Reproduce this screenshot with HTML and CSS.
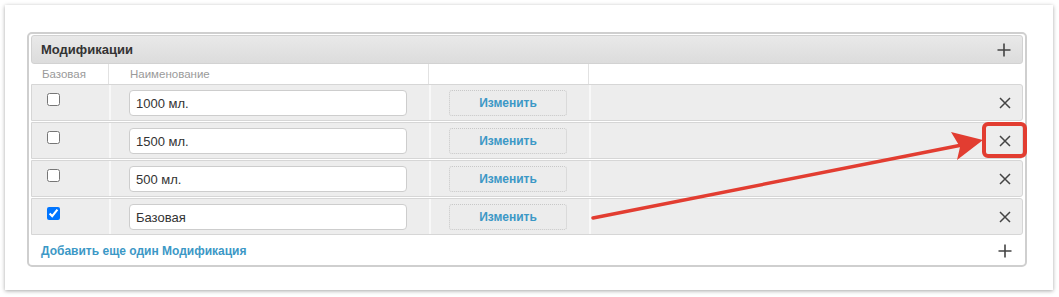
FILE: index.html
```html
<!DOCTYPE html>
<html lang="ru">
<head>
<meta charset="utf-8">
<title>Модификации</title>
<link rel="stylesheet" href="styles.css">
</head>
<body>
<div class="card">
  <div class="fieldset">
    <div class="fs-head">
      <span class="fs-title">Модификации</span>
      <svg class="ico-plus" width="14" height="14" viewBox="0 0 14 14"><path d="M7 0.5V13.5M0.5 7H13.5"/></svg>
    </div>
    <div class="grid col-heads">
      <div class="cell">Базовая</div>
      <div class="cell name-head">Наименование</div>
      <div class="cell"></div>
      <div class="cell"></div>
    </div>
    <div class="grid row">
      <div class="cell c-check"><input type="checkbox"></div>
      <div class="cell c-name"><input class="txt" type="text" value="1000 мл."></div>
      <div class="cell c-btn"><span class="btn">Изменить</span></div>
      <div class="cell c-del"><svg class="ico-x" width="12" height="12" viewBox="0 0 12 12"><path d="M1 1L11 11M11 1L1 11"/></svg></div>
    </div>
    <div class="grid row">
      <div class="cell c-check"><input type="checkbox"></div>
      <div class="cell c-name"><input class="txt" type="text" value="1500 мл."></div>
      <div class="cell c-btn"><span class="btn">Изменить</span></div>
      <div class="cell c-del"><svg class="ico-x" width="12" height="12" viewBox="0 0 12 12"><path d="M1 1L11 11M11 1L1 11"/></svg></div>
    </div>
    <div class="grid row">
      <div class="cell c-check"><input type="checkbox"></div>
      <div class="cell c-name"><input class="txt" type="text" value="500 мл."></div>
      <div class="cell c-btn"><span class="btn">Изменить</span></div>
      <div class="cell c-del"><svg class="ico-x" width="12" height="12" viewBox="0 0 12 12"><path d="M1 1L11 11M11 1L1 11"/></svg></div>
    </div>
    <div class="grid row">
      <div class="cell c-check"><input type="checkbox" checked></div>
      <div class="cell c-name"><input class="txt" type="text" value="Базовая"></div>
      <div class="cell c-btn"><span class="btn">Изменить</span></div>
      <div class="cell c-del"><svg class="ico-x" width="12" height="12" viewBox="0 0 12 12"><path d="M1 1L11 11M11 1L1 11"/></svg></div>
    </div>
    <div class="fs-foot">
      <a class="add-link">Добавить еще один Модификация</a>
      <svg class="ico-plus" width="14" height="14" viewBox="0 0 14 14"><path d="M7 0.5V13.5M0.5 7H13.5"/></svg>
    </div>
  </div>
</div>
<svg class="annot" width="1059" height="297" viewBox="0 0 1059 297">
  <line x1="593" y1="218" x2="962" y2="145" />
  <polygon points="983,140 951,132 960,147 957,160" />
</svg>
<div class="highlight"></div>
</body>
</html>
```

FILE: styles.css
```css
* { box-sizing: border-box; }
html, body { margin: 0; padding: 0; background: #fff; }
body {
  font-family: "Liberation Sans", Arial, sans-serif;
  color: #333;
  width: 1059px;
  height: 297px;
  overflow: hidden;
  position: relative;
}
.card {
  margin: 5px 0 0 5px;
  width: 1048px;
  height: 285px;
  background: #fff;
  box-shadow: 0 1px 4px rgba(0,0,0,0.35);
  padding: 27px 26px 0 22px;
}
.fieldset {
  border: 2px solid #cfcfcf;
  border-radius: 5px;
  padding: 1px 2px 0 2px;
  height: 235px;
}
.fs-head {
  height: 29px;
  border: 1px solid #d2d2d2;
  border-radius: 3px;
  background: linear-gradient(#e9e9e9, #dcdcdc);
  display: flex;
  align-items: center;
  justify-content: space-between;
  padding: 0 11px 0 9px;
}
.fs-title { font-weight: bold; font-size: 13px; color: #333; }
.ico-plus path { stroke: #444; stroke-width: 1.6; fill: none; }
.ico-x path { stroke: #444; stroke-width: 1.5; fill: none; }
.grid {
  display: grid;
  grid-template-columns: 77px 320px 160px 1fr;
}
.col-heads {
  height: 20px;
  font-size: 11.5px;
  color: #9a9a9a;
}
.col-heads .cell { display: flex; align-items: center; padding-left: 11px; }
.col-heads .cell + .cell { border-left: 1px solid #e2e2e2; }
.col-heads .name-head { padding-left: 21px; }
.row {
  height: 37px;
  margin-bottom: 1px;
  background: #ededed;
  border: 1px solid #d6d6d6;
  border-radius: 0 3px 3px 0;
}
.row .cell { display: flex; align-items: flex-start; }
.row .cell + .cell { border-left: 2px solid #f8f8f8; }
.c-check { padding: 8px 0 0 15px; }
.c-check input { margin: 0; width: 13px; height: 13px; }
.c-name { padding: 5px 0 0 18px; }
.txt {
  width: 278px;
  height: 26px;
  border: 1px solid #cdcdcd;
  border-radius: 4px;
  background: #fff;
  padding: 0 6px;
  font-family: "Liberation Sans", Arial, sans-serif;
  font-size: 13px;
  color: #333;
  outline: none;
}
.c-btn { padding: 5px 0 0 18px; }
.btn {
  width: 118px;
  height: 26px;
  border: 1px dotted #c8c8c8;
  border-radius: 3px;
  background: #ececec;
  display: flex;
  align-items: center;
  justify-content: center;
  font-weight: bold;
  font-size: 12px;
  color: #3c98c6;
}
.c-del { justify-content: flex-end; padding: 12px 11px 0 0; }
.fs-foot {
  height: 29px;
  display: flex;
  align-items: center;
  justify-content: space-between;
  padding: 0 11px 0 10px;
}
.add-link { font-weight: bold; font-size: 12px; color: #3c98c6; }
.annot {
  position: absolute;
  left: 0; top: 0;
  pointer-events: none;
}
.annot line { stroke: #e23d31; stroke-width: 3.5; stroke-linecap: round; }
.annot polygon { fill: #e23d31; }
.highlight {
  position: absolute;
  left: 982px; top: 122px;
  width: 45px; height: 36px;
  border: 4px solid #e23d31;
  border-radius: 6px;
}
```
